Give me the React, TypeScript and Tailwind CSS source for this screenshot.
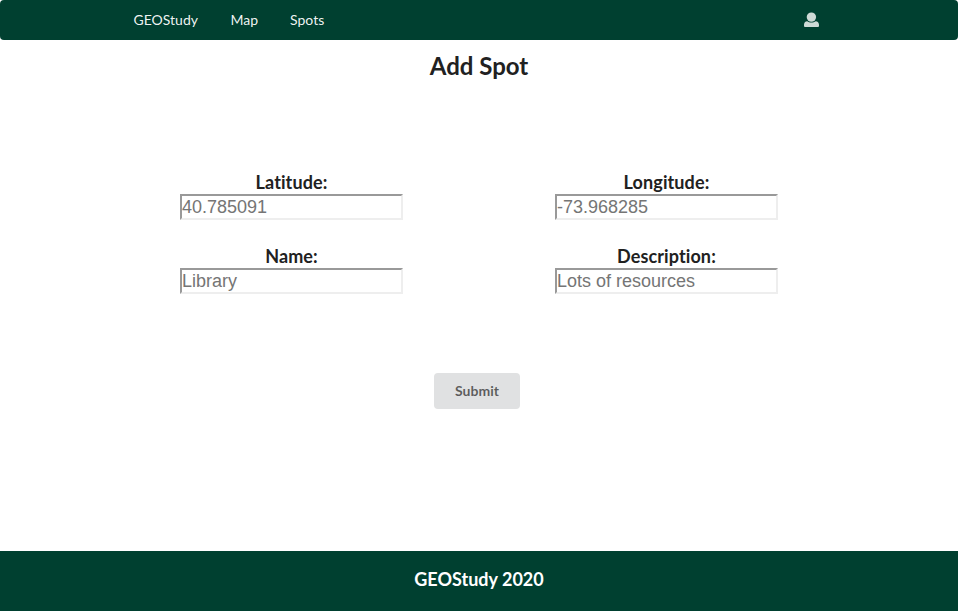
const fields = [
  { label: 'Latitude:', placeholder: '40.785091' },
  { label: 'Longitude:', placeholder: '-73.968285' },
  { label: 'Name:', placeholder: 'Library' },
  { label: 'Description:', placeholder: 'Lots of resources' },
];

function UserIcon() {
  return (
    <svg viewBox="0 0 15 16" className="block h-4 w-[15px]" fill="currentColor" aria-hidden="true">
      <circle cx="7.4" cy="5.1" r="4.7" />
      <path d="M3.200 9.200C4.300 10.100 5.700 10.600 7.400 10.600S10.500 10.100 11.600 9.200C13.700 9.400 15 10.800 15 12.700V13.700C15 14.500 14.500 15 13.700 15H1.300C.5 15 0 14.500 0 13.700V12.700C0 10.800 1.200 9.400 3.200 9.200Z" />
    </svg>
  );
}

export default function App() {
  return (
    <div className="flex h-[611px] w-full flex-col bg-white font-[Lato,sans-serif] text-[#212121] [font-variant-ligatures:none]">
      <nav className="flex h-10 shrink-0 items-center rounded bg-[#004030] pl-[133.5px] pr-[139px] text-sm leading-none text-white/95">
        <a className="mr-[32.5px]">GEOStudy</a>
        <a className="mr-8">Map</a>
        <a>Spots</a>
        <span className="ml-auto opacity-85"><UserIcon /></span>
      </nav>
      <main className="flex flex-1 flex-col items-center">
        <h1 className="mt-2.5 h-[31px] text-2xl leading-[31px] font-bold">Add Spot</h1>
        <form className="flex flex-col items-center">
          <div className="mt-[90px] grid grid-cols-[223px_223px] gap-x-[152px] gap-y-6">
            {fields.map((f) => (
              <label key={f.label} className="flex h-[50px] flex-col text-center text-lg leading-[22px] font-bold">
                <span className="h-[23px] tracking-[0.1px]">{f.label}</span>
                <input
                  placeholder={f.placeholder}
                  className="h-[26px] w-full rounded-none border-2 border-solid border-t-[#999] border-r-[#eee] border-b-[#eee] border-l-[#999] bg-white p-0 font-['Liberation_Sans',Arial,sans-serif] text-lg font-normal placeholder:text-[#757575]"
                />
              </label>
            ))}
          </div>
          <button type="button" className="mt-[78px] mr-1 h-9 w-[86px] rounded bg-[#e0e1e2] text-sm font-bold text-black/60">Submit</button>
        </form>
      </main>
      <footer className="flex h-[60px] shrink-0 items-center justify-center bg-[#004030] pb-1 text-lg font-bold text-white">GEOStudy 2020</footer>
    </div>
  );
}
